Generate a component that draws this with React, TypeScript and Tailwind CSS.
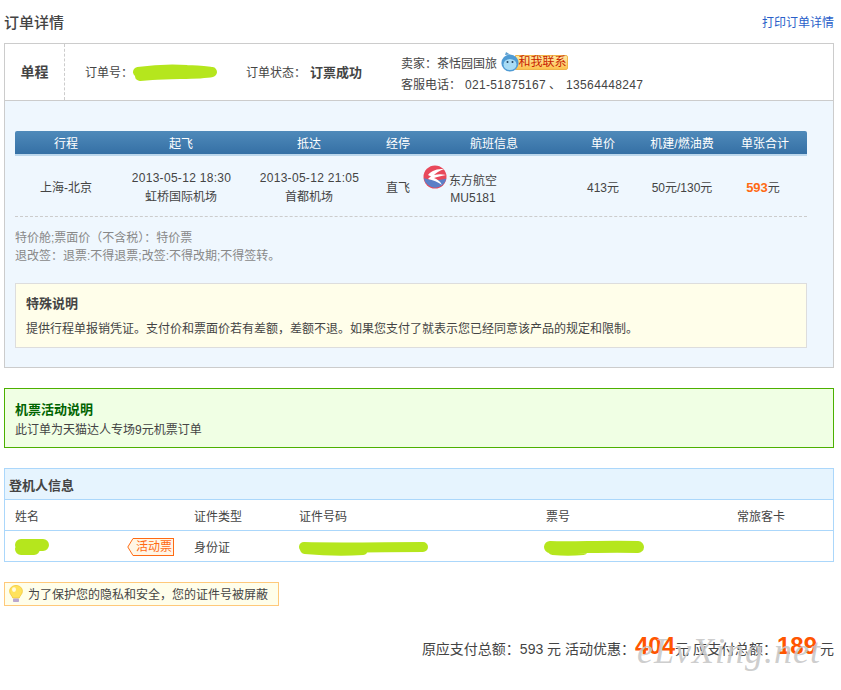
import React from "react";

const Scribble: React.FC<{ w: number; h: number; d: string; sw: number; className?: string }> = ({
  w,
  h,
  d,
  sw,
  className,
}) => (
  <svg width={w} height={h} viewBox={`0 0 ${w} ${h}`} className={className} fill="none">
    <path d={d} stroke="#b5e61d" strokeWidth={sw} strokeLinecap="round" strokeLinejoin="round" />
  </svg>
);

const AirlineLogo = () => (
  <svg width="24" height="24" viewBox="0 0 24 24" className="shrink-0">
    <circle cx="12" cy="12" r="11.5" fill="#e8485a" />
    <path d="M0.8 13 C5 15 14 16 23.4 13.5 A11.5 11.5 0 0 1 0.8 13Z" fill="#5b7fc7" />
    <path d="M5 10 C9 5 14 4 21 4 C16 6 13 8 11 10 C15 9 19 9 23 10 C18 11 14 12 11 13 C14 14 17 16 19 20 C15 17 10 15 5 14 C6 13 7 12 8 11.5 C7 11 6 10.5 5 10Z" fill="#fff" />
  </svg>
);

const QQIcon = () => (
  <svg width="18" height="20" viewBox="0 0 18 20" className="shrink-0 relative z-10">
    <path d="M4 3 L5 0 L9 2.5Z" fill="#5c9fd0" />
    <circle cx="9" cy="11" r="8.6" fill="#4f9bd4" />
    <ellipse cx="9" cy="12.5" rx="6.5" ry="5.6" fill="#a8dcf5" />
    <circle cx="6.5" cy="10" r="1" fill="#20405f" />
    <circle cx="11.5" cy="10" r="1" fill="#20405f" />
  </svg>
);

const BulbIcon = () => (
  <svg width="14" height="18" viewBox="0 0 14 18" className="shrink-0">
    <path d="M7 0.5 C3 0.5 0.6 3.2 0.6 6.3 C0.6 9 3 10.5 3.8 13 H10.2 C11 10.5 13.4 9 13.4 6.3 C13.4 3.2 11 0.5 7 0.5Z" fill="#ffe25c" stroke="#f3c63a" strokeWidth="0.8" />
    <ellipse cx="5" cy="4.6" rx="2" ry="2.4" fill="#fffbe0" />
    <rect x="4" y="13.4" width="6" height="3.6" rx="0.8" fill="#b9a8cf" />
  </svg>
);

const flightHeads = ["行程", "起飞", "抵达", "经停", "航班信息", "单价", "机建/燃油费", "单张合计"];

const App: React.FC = () => {
  return (
    <div className="w-[841px] h-[690px] relative overflow-hidden bg-white text-[12px] leading-[18px] text-[#444] [font-family:'Liberation_Sans','Noto_Sans_CJK_SC',sans-serif]">
      <div className="w-[830px] ml-[4px]">
        <div className="h-[43px] flex items-center justify-between pt-[3px]">
          <h2 className="text-[15px] font-medium">订单详情</h2>
          <a className="text-[#2a5fc9]">打印订单详情</a>
        </div>

        {/* order card */}
        <div className="border border-[#ccc]">
          <div className="h-[56px] flex items-center">
            <div className="w-[60px] h-full flex items-center justify-center border-r border-dashed border-[#ccc] text-[14px] font-bold">
              单程
            </div>
            <div className="w-[181px] pl-[20px] pt-[2px] flex items-center">
              <span>订单号：</span>
              <Scribble w={86} h={18} sw={10} className="-ml-[1px] -mt-[2px]" d="M6 9 C20 7 40 6 55 7 C65 7 72 8 80 9 C65 12 40 10 20 12 L8 13" />
            </div>
            <div className="w-[155px] pt-[2px] flex items-center">
              <span>订单状态：</span>
              <span className="ml-[4px] text-[13px] font-bold">订票成功</span>
            </div>
            <div className="flex flex-col pt-[3px]">
              <div className="flex items-center h-[22px]">
                <span>卖家：茶恬园国旅</span>
                <span className="ml-[4px] -mt-[3px] flex items-center">
                  <QQIcon />
                  <span className="-ml-[4px] h-[15px] w-[53px] pl-[2px] flex items-center justify-center rounded-r-[2px] border border-[#f0b44a] bg-gradient-to-b from-[#ffe9a0] to-[#fcc24e] text-[12px] leading-none text-[#c81f00]">
                    和我联系
                  </span>
                </span>
              </div>
              <div className="h-[20px] flex items-center">
                客服电话：
                <span className="ml-[4px] tracking-[0.3px]">021-51875167</span>
                <span className="ml-[3px] mr-[5px]">、</span>
                <span className="tracking-[0.35px]">13564448247</span>
              </div>
            </div>
          </div>

          <div className="border-t border-[#ccc] bg-[#eff7fe] px-[10px] pt-[30px] pb-[19px]">
            <div className="w-[792px]">
              <div className="grid grid-cols-[102px_128px_128px_50px_142px_76px_82px_84px] h-[25px] pt-[2px] items-center text-center text-white rounded-t-[2px] border-b-2 border-[#bcd7ec] bg-gradient-to-b from-[#4f8aba] to-[#3570a5]">
                {flightHeads.map((h) => (
                  <span key={h}>{h}</span>
                ))}
              </div>
              <div className="grid grid-cols-[102px_128px_128px_50px_142px_76px_82px_84px] h-[61px] pt-[4px] items-center text-center border-b border-dashed border-[#ccc]">
                <span>上海-北京</span>
                <div className="leading-[19px]">
                  <div className="tracking-[0.3px] pl-[1px]">2013-05-12 18:30</div>
                  <div>虹桥国际机场</div>
                </div>
                <div className="leading-[19px]">
                  <div className="tracking-[0.3px] pl-[1px]">2013-05-12 21:05</div>
                  <div>首都机场</div>
                </div>
                <span>直飞</span>
                <div className="h-[44px] flex items-start text-left">
                  <div className="-mt-[1px]">
                    <AirlineLogo />
                  </div>
                  <div className="ml-[2px] mt-[7px] leading-[17px] text-center">
                    <div>东方航空</div>
                    <div>MU5181</div>
                  </div>
                </div>
                <span>413元</span>
                <span>50元/130元</span>
                <span className="pr-[4px]">
                  <b className="text-[13px] text-[#ff6a13]">593</b>元
                </span>
              </div>
              <div className="mt-[12px] text-[#888]">
                <div>特价舱;票面价（不含税）：特价票</div>
                <div>退改签：退票:不得退票;改签:不得改期;不得签转。</div>
              </div>
              <div className="mt-[18px] h-[65px] border border-[#ddd] bg-[#fffeea] px-[10px] pt-[11px]">
                <div className="font-bold text-[13px]">特殊说明</div>
                <div className="mt-[7px]">
                  提供行程单报销凭证。支付价和票面价若有差额，差额不退。如果您支付了就表示您已经同意该产品的规定和限制。
                </div>
              </div>
            </div>
          </div>
        </div>

        {/* promo note */}
        <div className="mt-[20px] h-[60px] border border-[#4cb000] bg-[#f0ffe4] px-[10px] pt-[11px] leading-[20px]">
          <div className="font-bold text-[13px] text-[#006400]">机票活动说明</div>
          <div>此订单为天猫达人专场9元机票订单</div>
        </div>

        {/* passengers */}
        <div className="mt-[20px] border border-[#abd7fb]">
          <div className="h-[30px] pt-[4px] flex items-center pl-[4px] bg-[#e6f4fe] font-bold text-[13px]">登机人信息</div>
          <div className="h-[31px] pt-[4px] grid grid-cols-[179px_105px_247px_191px_1fr] items-center pl-[10px] border-t border-[#abd7fb]">
            <span>姓名</span>
            <span>证件类型</span>
            <span>证件号码</span>
            <span>票号</span>
            <span>常旅客卡</span>
          </div>
          <div className="h-[31px] pt-[2px] grid grid-cols-[179px_105px_247px_191px_1fr] items-center pl-[10px] border-t border-[#abd7fb]">
            <div className="flex items-center">
              <Scribble w={36} h={18} sw={12} className="-ml-[1px]" d="M7 7 H29 M7 11 H20" />
              <svg width="8" height="18" viewBox="0 0 8 18" className="ml-[77px]">
                <path d="M8 0.5 H6 L0.8 9 L6 17.5 H8" fill="#fff6e6" stroke="#ff6a13" />
              </svg>
              <span className="h-[18px] w-[39px] flex items-center justify-center border border-l-0 border-[#ff6a13] bg-[#fff6e6] text-[#ff6a13]">
                活动票
              </span>
            </div>
            <span className="pt-[2px]">身份证</span>
            <Scribble w={134} h={18} sw={10} className="-ml-[2px]" d="M7 9 C40 10 90 9 126 9 M8 11 C30 13 50 13 66 12" />
            <Scribble w={102} h={18} sw={12} className="-ml-[3px]" d="M7 9 C30 10 60 8 95 9 M10 11 C20 12 30 12 40 11" />
            <span />
          </div>
        </div>

        {/* privacy tip */}
        <div className="mt-[20px] w-[275px] h-[24px] flex items-center pl-[4px] border border-[#ffc97a] bg-[#fffeea]">
          <BulbIcon />
          <span className="ml-[5px] pt-[2px]">为了保护您的隐私和安全，您的证件号被屏蔽</span>
        </div>

        {/* totals */}
        <div className="mt-[27px] h-[32px] flex items-center justify-end text-[14px] whitespace-nowrap">
          <span>原应支付总额：593 元 活动优惠：</span>
          <b className="text-[24px] text-[#ff5500] leading-none -mt-[6px]">404</b>
          <span>元 应支付总额：</span>
          <b className="text-[24px] text-[#ff5500] leading-none -mt-[6px] mr-[3px]">189</b>
          <span>元</span>
        </div>
      </div>

      {/* watermark */}
      <span className="absolute left-[637px] top-[633px] text-[36px] leading-none italic text-[#c8c8c8]/90 [font-family:'Liberation_Serif',serif] tracking-[1px]">
        eLvXing.net
      </span>
    </div>
  );
};

export default App;
